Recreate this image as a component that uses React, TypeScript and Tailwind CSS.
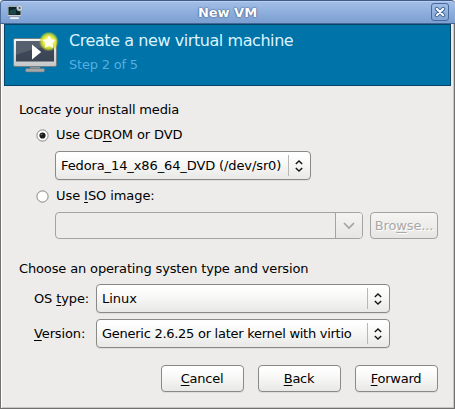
import type { ReactNode } from "react";

function WindowIcon() {
  return (
    <svg width="17" height="17" viewBox="0 0 17 17" className="shrink-0">
      <rect x="0.5" y="2" width="14" height="10" rx="1" fill="#e4e8ea" stroke="#8a98a8" strokeWidth="0.6" />
      <rect x="1.4" y="2.8" width="12.2" height="8.2" fill="#0c2628" />
      <path d="M2 10.4 3 6l6-1v5.4z" fill="#1f5050" opacity="0.8" />
      <path d="M5.5 12h4v1.6h-4z" fill="#9aa3a8" />
      <rect x="3" y="13.3" width="9" height="1.8" rx="0.8" fill="#f0f1f1" />
      <circle cx="12.6" cy="4" r="3" fill="#cfd9df" stroke="#7e93a8" strokeWidth="0.5" />
      <path d="M11.7 2.4v3.2l2.6-1.6z" fill="#3d5663" />
    </svg>
  );
}

function MachineIcon() {
  return (
    <svg width="48" height="44" viewBox="0 0 48 44" className="shrink-0">
      <defs>
        <radialGradient id="glow">
          <stop offset="0.45" stopColor="#f4f35a" />
          <stop offset="0.75" stopColor="#d3df28" stopOpacity="0.85" />
          <stop offset="1" stopColor="#a9cc30" stopOpacity="0" />
        </radialGradient>
        <linearGradient id="screen" x1="0" y1="0" x2="0" y2="1">
          <stop offset="0" stopColor="#414c5c" />
          <stop offset="1" stopColor="#3a4453" />
        </linearGradient>
        <linearGradient id="bezel" x1="0" y1="0" x2="0" y2="1">
          <stop offset="0" stopColor="#f7f7f7" />
          <stop offset="1" stopColor="#c4c6c8" />
        </linearGradient>
      </defs>
      <path d="M17 36h10v4H17z" fill="#8f9293" />
      <rect x="12.5" y="38.6" width="19" height="3.4" rx="1.2" fill="#a5a8a9" stroke="#67747b" strokeWidth="0.6" />
      <rect x="0.5" y="8.5" width="43" height="28" rx="1.6" fill="url(#bezel)" stroke="#6f7d85" />
      <rect x="3" y="11" width="38" height="20.5" fill="url(#screen)" />
      <path d="M3 11h38v5C27 17 16 20 3 25z" fill="#68717e" opacity="0.55" />
      <path d="M19 14.5v15l9.2-7.5z" fill="#fff" />
      <circle cx="35.8" cy="11.5" r="10" fill="url(#glow)" />
      <path d="m36 6 1.8 3.7 4.1.6-3 2.9.8 4.1-3.7-1.9-3.7 1.9.8-4.1-3-2.9 4.1-.6z" fill="#fffff0" stroke="#fffff0" strokeWidth="1" strokeLinejoin="round" />
    </svg>
  );
}

function Spinner() {
  return (
    <span className="ml-auto flex h-[21px] w-[19px] shrink-0 items-center justify-center border-l border-[#b9b8b6] pl-px">
      <svg width="8" height="12" viewBox="0 0 8 12" fill="none" stroke="#151515" strokeWidth="1.4">
        <path d="M.8 4 4 1l3.2 3M.8 8 4 11l3.2-3" />
      </svg>
    </span>
  );
}

function Combo({ width, text, children }: { width: string; text: string; children: ReactNode }) {
  return (
    <button className={`flex h-[29px] ${width} items-center rounded-[4px] border border-[#8b8986] bg-linear-to-b from-white from-10% via-[#f6f6f5] via-50% to-[#e8e8e6] pl-[5px] pr-[3px] shadow-[0_1px_0_#dedddb]`}>
      <span className={`whitespace-nowrap ${text}`}>{children}</span>
      <Spinner />
    </button>
  );
}

function Radio({ checked = false }: { checked?: boolean }) {
  return (
    <svg width="13" height="13" viewBox="0 0 13 13" className="shrink-0">
      <circle cx="6.5" cy="6.5" r="5.6" fill="#fff" stroke="#858380" strokeWidth="1" />
      {checked && <circle cx="6.5" cy="6.5" r="3.1" fill="#1c1c1c" />}
      {checked && <circle cx="5.5" cy="5.5" r="0.8" fill="#777" />}
    </svg>
  );
}

function Key({ children }: { children: ReactNode }) {
  return <span className="underline decoration-1 underline-offset-[2px]">{children}</span>;
}

function ActionButton({ children }: { children: ReactNode }) {
  return (
    <button className="flex h-[27px] w-[83px] items-center justify-center rounded-[4px] border border-[#8b8986] bg-linear-to-b from-white from-10% via-[#f6f6f5] via-50% to-[#e8e8e6] pr-px shadow-[0_1px_0_#dedddb]">
      <span className="tracking-[-0.25px]">{children}</span>
    </button>
  );
}

export default function App() {
  return (
    <div className="flex h-[409px] w-[455px] flex-col overflow-hidden bg-[#edeceb] font-['DejaVu_Sans',sans-serif] text-[13px] leading-[17px] text-black">
      <header className="flex h-[24px] shrink-0 items-center rounded-t-[4px] border-t border-b border-l border-t-[#3e5c8a] border-b-[#426593] border-l-[#4b6b9b] bg-linear-to-b from-[#a3bfe8] to-[#7b9fd1] pl-[6px] pr-[6px] shadow-[inset_0_1px_0_#b8cff0]">
        <WindowIcon />
        <h1 className="flex-1 text-center font-bold text-white [text-shadow:0_0_2px_#33527e,0_0_1px_#33527e]">New VM</h1>
        <button className="flex h-[18px] w-[18px] items-center justify-center rounded-[3px] border border-[#456a9e] bg-linear-to-b from-[#a2bee6] to-[#83a5d5]">
          <svg width="12" height="12" viewBox="0 0 12 12" strokeLinecap="round">
            <path d="m2.8 2.8 6.4 6.4m0-6.4L2.8 9.2" stroke="#3c608f" strokeWidth="4" />
            <path d="m2.8 2.8 6.4 6.4m0-6.4L2.8 9.2" stroke="#f4f8ff" strokeWidth="2.2" />
          </svg>
        </button>
      </header>
      <main className="flex flex-1 flex-col border-r border-b border-l border-[#72706e] shadow-[inset_1px_0_0_#fff,inset_-1px_-1px_0_#c8c6c4]">
        <section className="mr-[3px] ml-[3px] flex h-[62px] shrink-0 border border-[#064568] bg-[#0073a8] pl-[8px]">
          <div className="pt-[5px]"><MachineIcon /></div>
          <div className="flex flex-col pt-[5px] pl-[8px] whitespace-nowrap">
            <h2 className="text-[16px] leading-[22px] tracking-[-0.43px] text-[#dcf3ff]">Create a new virtual machine</h2>
            <p className="pt-[4px] tracking-[-0.2px] text-[#55afe2]">Step 2 of 5</p>
          </div>
        </section>
        <div className="flex flex-col pt-[15px] pl-[18px]">
          <p className="tracking-[-0.17px]">Locate your install media</p>
          <label className="mt-[9px] flex h-[16px] items-center gap-[7px] pl-[17px]">
            <Radio checked />
            <span className="pb-[2px] tracking-[-0.12px]">Use CD<Key>R</Key>OM or DVD</span>
          </label>
          <div className="mt-[8px] pl-[36px]">
            <Combo width="w-[256px]" text="tracking-[-0.11px]">Fedora_14_x86_64_DVD (/dev/sr0)</Combo>
          </div>
          <label className="mt-[8px] flex h-[16px] items-center gap-[7px] pl-[17px]">
            <Radio />
            <span className="pb-[2px] tracking-[-0.08px]">Use <Key>I</Key>SO image:</span>
          </label>
          <div className="mt-[8px] flex h-[27px] gap-[7px] pl-[36px]">
            <div className="flex w-[308px] overflow-hidden rounded-[4px] border border-[#a5a3a0]">
              <div className="flex-1" />
              <div className="flex w-[27px] items-center justify-center border-l border-[#a5a3a0] bg-linear-to-b from-[#f4f3f2] to-[#e7e6e5]">
                <svg width="12" height="8" viewBox="0 0 12 8" fill="none" stroke="#a5a3a0" strokeWidth="1.7">
                  <path d="m1 1 5 5 5-5" />
                </svg>
              </div>
            </div>
            <button className="flex w-[68px] items-center justify-center rounded-[4px] border border-[#a5a3a0] bg-linear-to-b from-[#f5f4f3] to-[#e7e6e5] text-[#aaa8a5] [text-shadow:1px_1px_0_#fff]">
              <span className="tracking-[-0.15px]">Bro<Key>w</Key>se...</span>
            </button>
          </div>
          <p className="mt-[21px] tracking-[-0.14px]">Choose an operating systen type and version</p>
          <div className="mt-[7px] flex items-center">
            <span className="w-[77px] pl-[15px] tracking-[-0.12px] whitespace-nowrap">OS <Key>t</Key>ype:</span>
            <Combo width="w-[294px]" text="">Linux</Combo>
          </div>
          <div className="mt-[6px] flex items-center">
            <span className="w-[77px] pl-[15px] tracking-[-0.12px] whitespace-nowrap"><Key>V</Key>ersion:</span>
            <Combo width="w-[294px]" text="tracking-[-0.27px]">Generic 2.6.25 or later kernel with virtio</Combo>
          </div>
          <div className="mt-[17px] flex gap-[14px] pl-[142px]">
            <ActionButton><Key>C</Key>ancel</ActionButton>
            <ActionButton><Key>B</Key>ack</ActionButton>
            <ActionButton><Key>F</Key>orward</ActionButton>
          </div>
        </div>
      </main>
    </div>
  );
}
